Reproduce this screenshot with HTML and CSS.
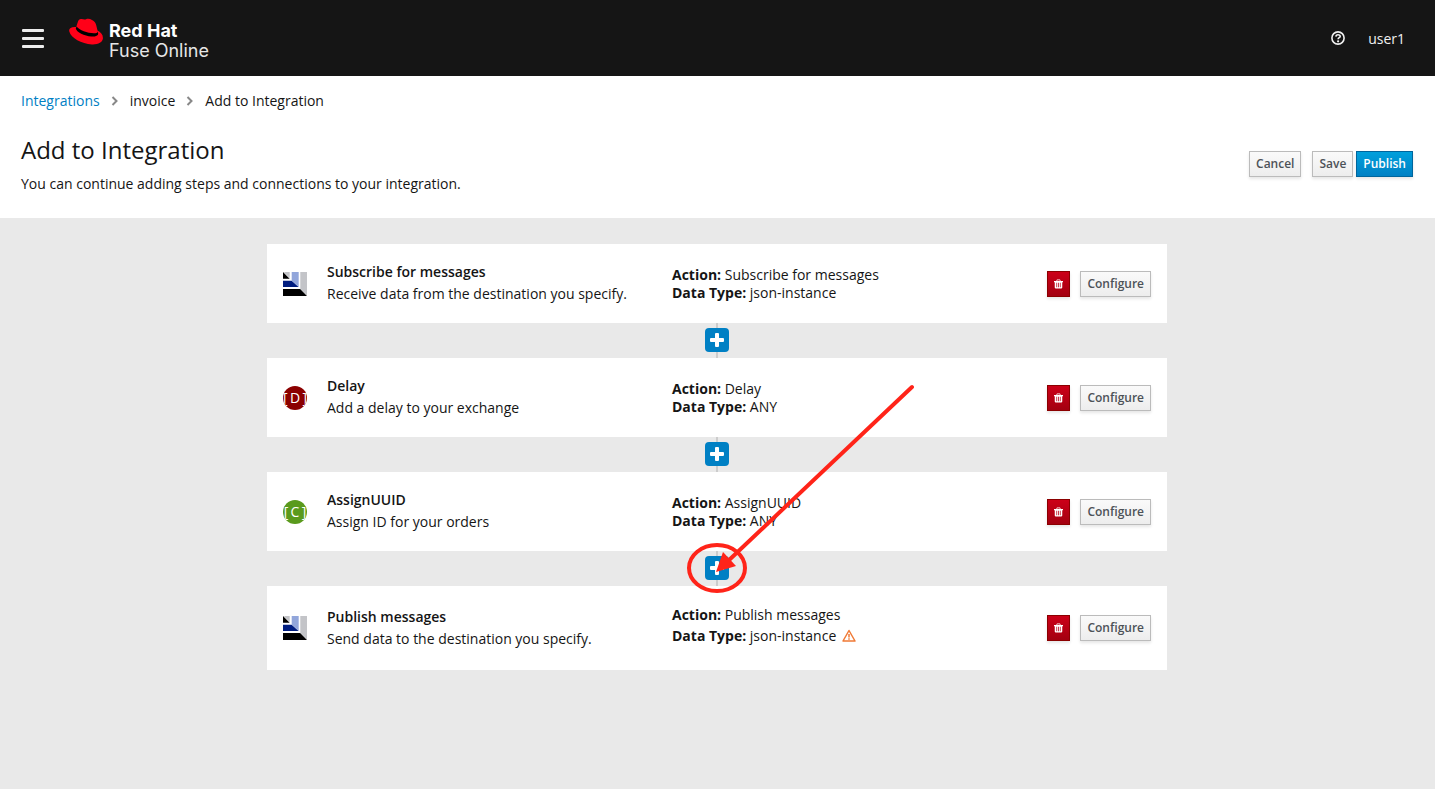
FILE: index.html
```html
<!DOCTYPE html>
<html lang="en">
<head>
<meta charset="utf-8">
<meta name="viewport" content="width=device-width, initial-scale=1">
<title>Add to Integration</title>
<link rel="stylesheet" href="styles.css">
</head>
<body>
<svg class="sprite" aria-hidden="true">
  <symbol id="trash" viewBox="0 0 12 12"><path fill="currentColor" fill-rule="evenodd" d="M4 0h4l1 2h3v1.500h-1V10.500a1.500 1.500 0 0 1-1.500 1.500h-7A1.500 1.500 0 0 1 1 10.500V3.500H0V2h3zM4.600 1l-.5 1h3.800l-.5-1zM3.200 4.200v6h1v-6zm2.300 0v6h1v-6zm2.300 0v6h1v-6z"/></symbol>
  <symbol id="plus" viewBox="0 0 24 24"><rect width="24" height="24" rx="4" fill="#0080c4"/><path fill="#fff" d="M10 6q0-1 1-1h2q1 0 1 1v4h4q1 0 1 1v2q0 1-1 1h-4v4q0 1-1 1h-2q-1 0-1-1v-4H6q-1 0-1-1v-2q0-1 1-1h4z"/></symbol>
  <symbol id="chevron" viewBox="0 0 8 10"><path d="M1.500 1l4 4-4 4" fill="none" stroke="#888" stroke-width="2"/></symbol>
  <symbol id="broker" viewBox="0 0 24 24"><path d="M0 0l6.700 6.700H0zM0 17h17.300l6.700 7H0z"/><path d="M0 8.700h8.700l7 6.300H0z" fill="#001d80"/><path d="M2 0h4.700v6L1 .5zM17.300 0H24v23.500L17.300 17z" fill="#c3c4c8"/><path d="M8.700 0h7v15l-7-6.500z" fill="#92a6db"/></symbol>
</svg>
<header class="masthead">
  <button class="menu" aria-label="Menu"><span></span><span></span><span></span></button>
  <a class="brand" href="#">
    <svg class="hat" viewBox="0 0 34 27" aria-hidden="true"><path fill="#ff0018" d="M9 3.500C9.600 1.500 10.800.7 12.500 1c2 .4 3.200.7 4.500.2 2-.9 3.800-.5 6 .7 2.500 1.300 3.800 3 4.300 5.500l1.200 5.200c3.800 2 5.700 4.500 5.400 8-.4 3.700-4.800 6.200-11 5.900C12.500 25.700 2 20 .3 13.500c-.8-3.200 2-5 6.900-4.500z"/><path d="M7.600 8.500c3 4 13.400 7.700 20 6.500 1.200-.3 1.300-1.200.9-2.700l.7 3.400c0 2-3 3.100-6.900 2.800-6.700-.5-15-4.500-15.500-8z"/></svg>
    <span class="brand-text"><b>Red Hat</b><span>Fuse Online</span></span>
  </a>
  <button class="help" aria-label="Help"><svg viewBox="0 0 14 14"><circle cx="7" cy="7" r="6.100" fill="none" stroke="currentColor" stroke-width="1.600"/><path d="M4.900 5.600C5 4.300 5.900 3.700 7 3.700s2.200.7 2.200 1.700C9.200 6.700 7.100 6.700 7.100 8.200" fill="none" stroke="currentColor" stroke-width="1.600"/><circle cx="7.100" cy="10.300" r="1.100" fill="currentColor"/></svg></button>
  <button class="user">user1</button>
</header>
<section class="page-head">
  <nav class="crumbs" aria-label="Breadcrumb">
    <a href="#">Integrations</a><svg><use href="#chevron"/></svg><span>invoice</span><svg><use href="#chevron"/></svg><span>Add to Integration</span>
  </nav>
  <div class="title-row">
    <div><h1>Add to Integration</h1><p>You can continue adding steps and connections to your integration.</p></div>
    <div class="actions"><button class="btn">Cancel</button><button class="btn save">Save</button><button class="btn primary">Publish</button></div>
  </div>
</section>
<main class="canvas">
  <div class="flow">
    <article class="step">
      <svg class="step-icon"><use href="#broker"/></svg>
      <div class="info"><h2>Subscribe for messages</h2><p>Receive data from the destination you specify.</p></div>
      <div class="meta"><p><b>Action:</b> Subscribe for messages</p><p><b>Data Type:</b> json-instance</p></div>
      <button class="btn danger" aria-label="Delete"><svg><use href="#trash"/></svg></button><button class="btn">Configure</button>
    </article>
    <div class="link"><button class="add" aria-label="Add step"><svg><use href="#plus"/></svg></button></div>
    <article class="step">
      <span class="step-icon letter red"><span>[&thinsp;D&thinsp;]</span></span>
      <div class="info"><h2>Delay</h2><p>Add a delay to your exchange</p></div>
      <div class="meta"><p><b>Action:</b> Delay</p><p><b>Data Type:</b> ANY</p></div>
      <button class="btn danger" aria-label="Delete"><svg><use href="#trash"/></svg></button><button class="btn">Configure</button>
    </article>
    <div class="link"><button class="add" aria-label="Add step"><svg><use href="#plus"/></svg></button></div>
    <article class="step">
      <span class="step-icon letter green"><span>[&thinsp;C&thinsp;]</span></span>
      <div class="info"><h2>AssignUUID</h2><p>Assign ID for your orders</p></div>
      <div class="meta"><p><b>Action:</b> AssignUUID</p><p><b>Data Type:</b> ANY</p></div>
      <button class="btn danger" aria-label="Delete"><svg><use href="#trash"/></svg></button><button class="btn">Configure</button>
    </article>
    <div class="link"><button class="add" aria-label="Add step"><svg><use href="#plus"/></svg></button>
      <svg class="pointer" viewBox="0 0 230 210" aria-hidden="true"><g fill="none" stroke="#ff2419" stroke-width="4"><ellipse cx="32" cy="184" rx="28" ry="23"/><path d="M227 3L42 178" stroke-linecap="round"/></g><path fill="#ff2419" d="M31 188l7-20 13 14z"/></svg>
    </div>
    <article class="step warned">
      <svg class="step-icon"><use href="#broker"/></svg>
      <div class="info"><h2>Publish messages</h2><p>Send data to the destination you specify.</p></div>
      <div class="meta"><p><b>Action:</b> Publish messages</p><p><b>Data Type:</b> json-instance <svg class="warning" viewBox="0 0 14 13" role="img" aria-label="Warning"><path d="M7 1.500L13 12H1z" fill="none" stroke="#f07a36" stroke-width="1.500" stroke-linejoin="round"/><path d="M7 5v3.500M7 9.300v1.400" stroke="#f07a36" stroke-width="1.500"/></svg></p></div>
      <button class="btn danger" aria-label="Delete"><svg><use href="#trash"/></svg></button><button class="btn">Configure</button>
    </article>
  </div>
</main>
</body>
</html>
```
FILE: styles.css
```css
* { box-sizing: border-box; }
body {
  margin: 0;
  min-height: 100vh;
  display: flex;
  flex-direction: column;
  background: #e9e9e9;
  color: #151515;
  font: 14px/22px "Open Sans", sans-serif;
}
button { font: inherit; cursor: pointer; }
h1, h2, p { margin: 0; }
svg { display: block; }
.sprite { position: absolute; width: 0; height: 0; }

.masthead {
  display: flex;
  align-items: center;
  height: 76px;
  padding: 0 30px 0 22px;
  background: #151515;
  color: #f0f0f0;
}
.menu, .help, .user, .add { padding: 0; border: 0; background: none; color: inherit; }
.menu { display: grid; gap: 5px; width: 22px; }
.menu span { height: 3px; border-radius: 1px; background: #ededed; }
.brand { display: flex; gap: 6px; margin-left: 25px; padding-top: 2px; color: #e6e6e6; text-decoration: none; }
.hat { width: 34px; height: 27px; }
.brand-text { display: flex; flex-direction: column; padding-top: 3px; font: 18px/20px Inter, sans-serif; }
.brand-text b { color: #fff; font-weight: 700; }
.help { margin-left: auto; }
.help svg { width: 14px; height: 14px; }
.user { margin-left: 23px; padding-top: 2px; }

.page-head { padding: 14px 22px 23px 21px; background: #fff; }
.crumbs { display: flex; align-items: center; }
.crumbs a { color: #0080c4; text-decoration: none; }
.crumbs svg { width: 8px; height: 10px; margin: 0 11px; }
.title-row { display: flex; align-items: center; justify-content: space-between; margin-top: 22px; }
h1 { font-size: 24px; line-height: 32px; font-weight: 400; margin-bottom: 7px; }
.actions { display: flex; gap: 3px; padding-bottom: 2px; }
.btn {
  height: 26px;
  padding: 0 6px;
  border: 1px solid #bbb;
  background: linear-gradient(#fafafa, #ededed);
  box-shadow: 0 2px 3px rgba(3, 3, 3, .1);
  color: #4d5258;
  font-size: 12px;
  font-weight: 600;
  line-height: 20px;
}
.save { margin-left: 8px; }
.primary { border-color: #00659c; background: linear-gradient(#00a0dc, #0080c4); color: #fff; }

.canvas { flex: 1; padding: 26px 21px 26px 20px; }
.flow { max-width: 900px; margin: 0 auto; }
.step { display: flex; align-items: center; min-height: 79px; padding: 0 16px; background: #fff; }
.warned { min-height: 84px; }
.step-icon { flex: none; width: 24px; height: 24px; margin-right: 20px; }
.info { flex: none; width: 345px; padding-bottom: 1px; }
.info h2 { font-size: 14px; line-height: 22px; font-weight: 600; }
.meta { flex: 1; line-height: 18px; }
.warned .meta { line-height: 21px; padding-bottom: 6px; }
.warning { display: inline-block; width: 14px; height: 13px; margin-left: 2px; vertical-align: -1px; }
.letter { display: flex; align-items: center; justify-content: center; border-radius: 50%; overflow: hidden; color: #fff; font-size: 14px; font-weight: 400; white-space: nowrap; }
.red { background: #8b0000; }
.green { background: #5a9a1d; }
.danger { margin-right: 10px; border-color: #8b0000; background: linear-gradient(#cc0018, #a30010); color: #fff; }
.danger svg { width: 9px; height: 10px; }
.link {
  position: relative;
  display: flex;
  align-items: center;
  justify-content: center;
  height: 35px;
  padding-bottom: 1px;
  background: linear-gradient(#ccc, #ccc) center / 2px 100% no-repeat;
}
.add svg { width: 24px; height: 24px; }
.pointer { position: absolute; top: -167px; left: calc(50% - 32px); width: 230px; height: 210px; pointer-events: none; }
```
